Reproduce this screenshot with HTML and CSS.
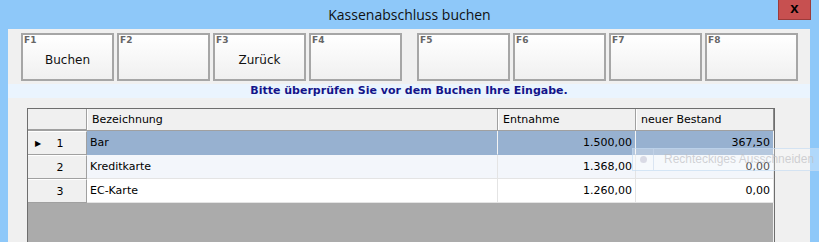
FILE: index.html
```html
<!DOCTYPE html>
<html lang="de">
<head>
    <meta charset="UTF-8">
    <title>Kassenabschluss buchen</title>
    <link rel="stylesheet" href="styles.css">
</head>
<body>
    <div class="window">
        <div class="titlebar">
            <span class="title">Kassenabschluss buchen</span>
            <span class="close">x</span>
        </div>
        <div class="content">
            <div class="toolbar">
                <div class="group">
                    <div class="fkey"><span class="key">F1</span><span class="label">Buchen</span></div>
                    <div class="fkey"><span class="key">F2</span><span class="label"></span></div>
                    <div class="fkey"><span class="key">F3</span><span class="label">Zurück</span></div>
                    <div class="fkey"><span class="key">F4</span><span class="label"></span></div>
                </div>
                <div class="group">
                    <div class="fkey"><span class="key">F5</span><span class="label"></span></div>
                    <div class="fkey"><span class="key">F6</span><span class="label"></span></div>
                    <div class="fkey"><span class="key">F7</span><span class="label"></span></div>
                    <div class="fkey"><span class="key">F8</span><span class="label"></span></div>
                </div>
            </div>

            <div class="message">Bitte überprüfen Sie vor dem Buchen Ihre Eingabe.</div>

            <div class="grid">
                <div class="row head">
                    <div class="rh"></div>
                    <div class="cell">Bezeichnung</div>
                    <div class="cell">Entnahme</div>
                    <div class="cell">neuer Bestand</div>
                </div>
                <div class="row selected">
                    <div class="rh"><span class="arrow">&#9654;</span>1</div>
                    <div class="cell">Bar</div>
                    <div class="cell num">1.500,00</div>
                    <div class="cell num">367,50</div>
                </div>
                <div class="row alt">
                    <div class="rh">2</div>
                    <div class="cell">Kreditkarte</div>
                    <div class="cell num">1.368,00</div>
                    <div class="cell num">0,00</div>
                </div>
                <div class="row">
                    <div class="rh">3</div>
                    <div class="cell">EC-Karte</div>
                    <div class="cell num">1.260,00</div>
                    <div class="cell num">0,00</div>
                </div>
                <div class="empty"></div>
            </div>
        </div>

        <!-- Einblendung vom Screenshot-Werkzeug -->
        <div class="ghost">
            <span class="ghost-icon"></span>
            <span class="ghost-text">Rechteckiges Ausschneiden</span>
        </div>
    </div>
</body>
</html>
```

FILE: styles.css
```css
html, body {
    margin: 0;
    height: 100%;
}
body {
    font-family: "Liberation Sans", Arial, sans-serif;
    background-color: #8ec8f9;
}
.window {
    position: relative;
    display: flex;
    flex-direction: column;
    height: 242px;
    width: 819px;
    overflow: hidden;
}
.titlebar {
    height: 29px;
    display: flex;
    align-items: center;
    justify-content: center;
    position: relative;
    background-color: #8ec8f9;
}
.title {
    font-family: "Open Sans", "Noto Sans", sans-serif;
    font-size: 14px;
    color: #111;
    margin-top: -1px;
}
.close {
    position: absolute;
    top: 0;
    right: 8px;
    width: 31px;
    height: 19px;
    background-color: #c75050;
    border: 1px solid #9b3b3b;
    border-top: none;
    color: #000;
    font-weight: bold;
    font-size: 15px;
    line-height: 16px;
    text-align: center;
}
.content {
    flex: 1;
    display: flex;
    flex-direction: column;
    margin: 0 9px 0 8px;
    background-color: #f0f0f0;
}
.toolbar {
    display: flex;
    gap: 15px;
    padding: 4px 0 0 13px;
}
.group {
    display: flex;
    gap: 3px;
}
.fkey {
    width: 89px;
    height: 44px;
    border: 2px solid #a6a6a6;
    background: linear-gradient(#ffffff, #f0f0f0);
    display: flex;
    flex-direction: column;
}
.key {
    font-family: "DejaVu Sans", sans-serif;
    font-size: 9px;
    font-weight: bold;
    color: #666;
    line-height: 11px;
    padding-left: 1px;
}
.label {
    font-family: "DejaVu Sans", sans-serif;
    font-size: 12px;
    color: #111;
    text-align: center;
    margin-top: 7px;
}
.message {
    margin-top: 3px;
    height: 14px;
    background-color: #eaf4fe;
    color: #14148a;
    font-family: "DejaVu Sans", sans-serif;
    font-weight: bold;
    font-size: 11px;
    line-height: 14px;
    text-align: center;
}
.grid {
    margin: 10px 0 0 19px;
    width: 746px;
    flex: 1;
    display: flex;
    flex-direction: column;
    border: 1px solid #6e6e6e;
    border-bottom: none;
    font-family: "DejaVu Sans", sans-serif;
    font-size: 11px;
    color: #000;
}
.row {
    display: grid;
    grid-template-columns: 59px 411px 138px 1fr;
    height: 24px;
    background-color: #fff;
}
.row.head {
    height: 21px;
    background-color: #f0f0f0;
    border-bottom: 1px solid #a0a0a0;
}
.row.selected .cell {
    background-color: #97b1d0;
}
.row.alt .cell {
    background-color: #f3f6fb;
}
.cell {
    display: flex;
    align-items: center;
    padding: 0 3px;
    border-right: 1px solid #e4e4e4;
    border-bottom: 1px solid #e4e4e4;
    white-space: nowrap;
    overflow: hidden;
}
.row.selected .cell {
    border-right-color: #f4f4f4;
    border-bottom-color: #97b1d0;
}
.head .cell {
    padding-left: 4px;
    border-left: 1px solid #fff;
    border-right: 1px solid #a0a0a0;
    border-bottom: none;
}
.head .cell:last-child {
    border-right: 1px solid #8a8a8a;
}
.cell.num {
    justify-content: flex-end;
}
.rh {
    background-color: #f0f0f0;
    border-right: 1px solid #a0a0a0;
    border-bottom: 1px solid #a0a0a0;
    border-top: 1px solid #fff;
    display: flex;
    align-items: center;
    justify-content: center;
    position: relative;
    padding-left: 6px;
}
.head .rh {
    border-top: none;
}
.arrow {
    position: absolute;
    left: 7px;
    font-size: 8px;
}
.empty {
    flex: 1;
    background-color: #ababab;
    border-right: 1px solid #f0f0f0;
}
.ghost {
    position: absolute;
    left: 632px;
    top: 148px;
    width: 200px;
    height: 21px;
    border: 1px solid rgba(190, 215, 240, 0.6);
    background-color: rgba(255, 255, 255, 0.3);
    display: flex;
    align-items: center;
    white-space: nowrap;
}
.ghost-icon {
    flex: none;
    width: 7px;
    height: 7px;
    border-radius: 50%;
    background-color: rgba(205, 205, 220, 0.7);
    margin: 0 0 0 7px;
}
.ghost-text {
    flex: none;
    margin-left: 6px;
    padding-left: 10px;
    border-left: 1px solid rgba(200, 215, 235, 0.6);
    height: 21px;
    line-height: 21px;
    font-family: "Liberation Sans", Arial, sans-serif;
    font-size: 12px;
    color: rgba(190, 190, 195, 0.7);
}
```
